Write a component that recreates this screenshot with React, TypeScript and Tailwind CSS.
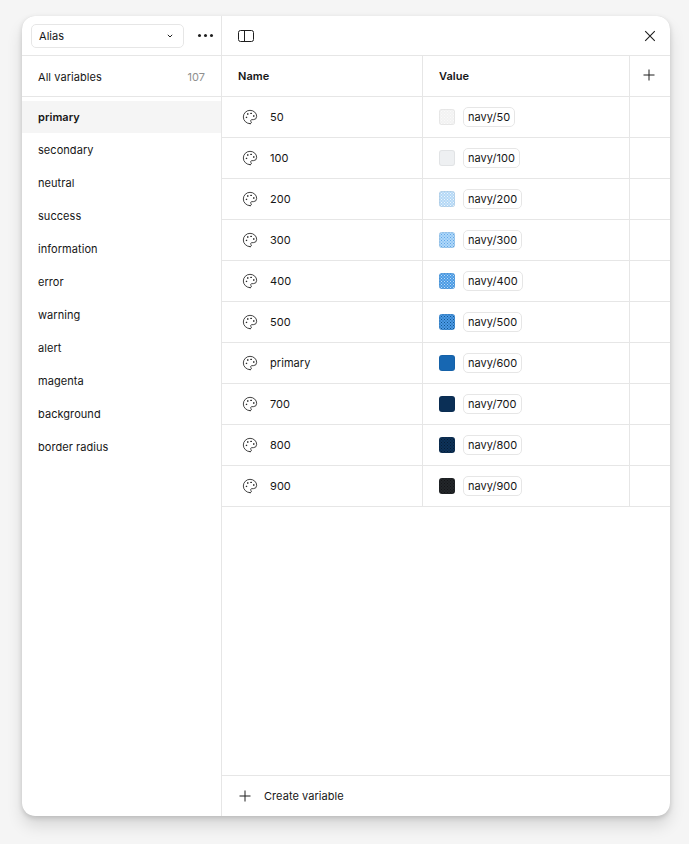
import { Palette } from "lucide-react";

const groups = ["primary", "secondary", "neutral", "success", "information", "error", "warning", "alert", "magenta", "background", "border radius"];

const rows = [
  { name: "50", value: "navy/50", swatch: "bg-[#f2f2f2] bg-[radial-gradient(circle,#fafafa_0.7px,transparent_0.8px),radial-gradient(circle,#fafafa_0.7px,transparent_0.8px)] bg-[length:3px_3px] bg-[position:0_0,1.5px_1.5px]" },
  { name: "100", value: "navy/100", swatch: "bg-[#eef0f2]" },
  { name: "200", value: "navy/200", swatch: "bg-[#b4d8f6] bg-[radial-gradient(circle,#eef6fc_0.7px,transparent_0.8px),radial-gradient(circle,#eef6fc_0.7px,transparent_0.8px)] bg-[length:3px_3px] bg-[position:0_0,1.5px_1.5px]" },
  { name: "300", value: "navy/300", swatch: "bg-[#b0d8f9] bg-[radial-gradient(circle,#5ea6e8_0.6px,transparent_0.7px),radial-gradient(circle,#5ea6e8_0.6px,transparent_0.7px)] bg-[length:3px_3px] bg-[position:0_0,1.5px_1.5px]" },
  { name: "400", value: "navy/400", swatch: "bg-[#4a9ae4] bg-[radial-gradient(circle,#bcdcf7_0.7px,transparent_0.8px),radial-gradient(circle,#bcdcf7_0.7px,transparent_0.8px)] bg-[length:3px_3px] bg-[position:0_0,1.5px_1.5px]" },
  { name: "500", value: "navy/500", swatch: "bg-[#4a9ae6] bg-[radial-gradient(circle,#14568f_0.7px,transparent_0.8px),radial-gradient(circle,#14568f_0.7px,transparent_0.8px)] bg-[length:3px_3px] bg-[position:0_0,1.5px_1.5px]" },
  { name: "primary", value: "navy/600", swatch: "bg-[#1767b2]" },
  { name: "700", value: "navy/700", swatch: "bg-[#0b2f56]" },
  { name: "800", value: "navy/800", swatch: "bg-[#0d3259] bg-[radial-gradient(circle,#071d35_0.7px,transparent_0.8px),radial-gradient(circle,#071d35_0.7px,transparent_0.8px)] bg-[length:3px_3px] bg-[position:0_0,1.5px_1.5px]" },
  { name: "900", value: "navy/900", swatch: "bg-[#23262a] bg-[radial-gradient(circle,#141517_0.7px,transparent_0.8px),radial-gradient(circle,#141517_0.7px,transparent_0.8px)] bg-[length:3px_3px] bg-[position:0_0,1.5px_1.5px]" },
];

function PlusIcon() {
  return (
    <svg width="12" height="12" viewBox="0 0 12 12" fill="none" stroke="#1e1e1e" strokeWidth="1">
      <path d="M6 0.5v11M0.5 6h11" />
    </svg>
  );
}

export default function App() {
  return (
    <div className="h-[844px] w-[689px] overflow-hidden bg-[#f5f5f5] pl-[22px] pt-4 font-['Inter',sans-serif] text-[11px] tracking-[0.055px] text-[#161616]">
      <div className="flex h-[800px] w-[648px] overflow-hidden rounded-[13px] bg-white shadow-[0_2px_5px_rgba(0,0,0,0.15),0_10px_16px_rgba(0,0,0,0.12),0_0_0.5px_rgba(0,0,0,0.15)]">
        <aside className="flex w-[200px] shrink-0 flex-col border-r border-[#e6e6e6]">
          <div className="flex h-10 shrink-0 items-center border-b border-[#e6e6e6] pl-[9px] pr-2">
            <div className="flex h-6 w-[153px] items-center justify-between rounded-[5px] border border-[#e6e6e6] pl-[7px] pr-[10px]">
              <span className="pt-px">Alias</span>
              <svg width="6" height="4" viewBox="0 0 6 4" fill="none" stroke="#1e1e1e" strokeWidth="1">
                <path d="M0.8 0.8L3 3L5.2 0.8" />
              </svg>
            </div>
            <div className="ml-auto flex gap-[3px]">
              <span className="size-[3px] rounded-full bg-[#1e1e1e]" />
              <span className="size-[3px] rounded-full bg-[#1e1e1e]" />
              <span className="size-[3px] rounded-full bg-[#1e1e1e]" />
            </div>
          </div>
          <div className="flex h-[41px] shrink-0 items-center justify-between border-b border-[#e6e6e6] pl-4 pr-4 pt-0.5">
            <span>All variables</span>
            <span className="text-[#8f8f8f]">107</span>
          </div>
          <ul className="pt-1">
            {groups.map((g, i) => (
              <li key={g} className={i === 0 ? "mb-px flex h-[32px] items-center bg-[#f5f5f5] pl-4 font-semibold" : "flex h-[33px] items-center pl-4"}>
                {g}
              </li>
            ))}
          </ul>
        </aside>
        <main className="flex min-w-0 flex-1 flex-col">
          <div className="flex h-10 shrink-0 items-center justify-between border-b border-[#e6e6e6] pl-4 pr-[14px]">
            <svg width="16" height="12" viewBox="0 0 16 12" fill="none" stroke="#1e1e1e" strokeWidth="1">
              <rect x="0.5" y="0.5" width="15" height="11" rx="2" />
              <path d="M6.5 0.5v11" />
            </svg>
            <svg width="12" height="12" viewBox="0 0 12 12" fill="none" stroke="#1e1e1e" strokeWidth="1.1">
              <path d="M1.2 1.2l9.6 9.6M10.8 1.2l-9.6 9.6" />
            </svg>
          </div>
          <div className="flex h-[41px] shrink-0 border-b border-[#e6e6e6] font-semibold">
            <div className="flex w-[201px] items-center border-r border-[#e6e6e6] pl-4">Name</div>
            <div className="flex w-[207px] items-center border-r border-[#e6e6e6] pl-4">Value</div>
            <div className="flex flex-1 items-center justify-center pb-0.5 pr-0.5"><PlusIcon /></div>
          </div>
          {rows.map((r) => (
            <div key={r.name} className="flex h-[41px] shrink-0 border-b border-[#e6e6e6]">
              <div className="flex w-[201px] items-center border-r border-[#e6e6e6] pl-5">
                <Palette size={16} strokeWidth={1.25} className="text-[#1e1e1e]" />
                <span className="ml-3">{r.name}</span>
              </div>
              <div className="flex w-[207px] items-center border-r border-[#e6e6e6] pl-4">
                <span className={"size-4 rounded-[3px] border border-black/5 " + r.swatch} />
                <span className="ml-2 flex h-5 items-center rounded-[5px] border border-[#e6e6e6] px-1">{r.value}</span>
              </div>
              <div className="flex-1" />
            </div>
          ))}
          <div className="mt-auto flex h-[41px] shrink-0 items-center border-t border-[#e6e6e6] pl-[17px]">
            <PlusIcon />
            <span className="ml-[13px]">Create variable</span>
          </div>
        </main>
      </div>
    </div>
  );
}
